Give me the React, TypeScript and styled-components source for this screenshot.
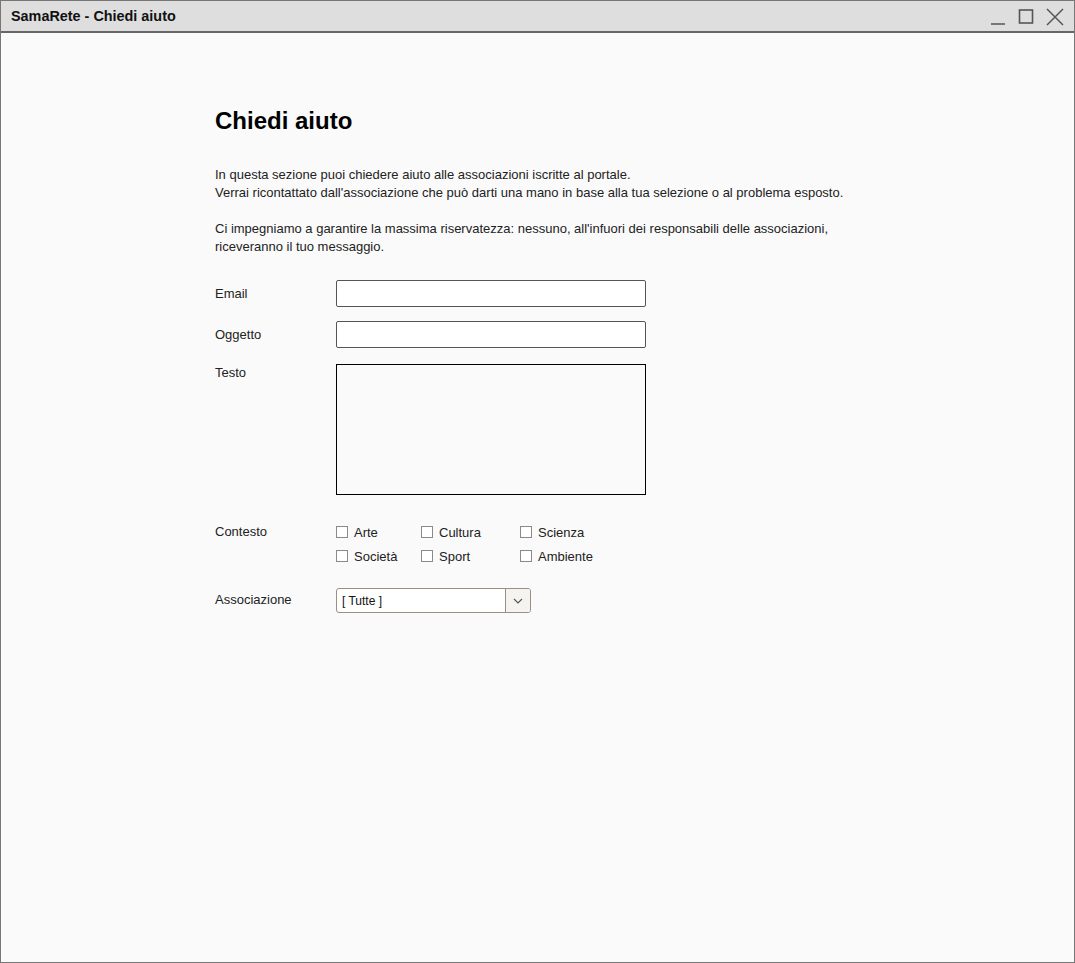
import styled, { createGlobalStyle } from 'styled-components';

const GlobalStyle = createGlobalStyle`
    html, body {
        margin: 0;
        padding: 0;
        background: #ffffff;
    }
    * {
        box-sizing: border-box;
    }
`;

const Window = styled.div`
    width: 1075px;
    height: 963px;
    border: 1px solid #777777;
    background: #fafafa;
    display: flex;
    flex-direction: column;
    font-family: 'Liberation Sans', Arial, sans-serif;
    color: #222222;
`;

const TitleBar = styled.div`
    height: 32px;
    flex: none;
    background: #dedede;
    border-bottom: 2px solid #666666;
    display: flex;
    align-items: center;
    justify-content: space-between;
    padding: 0 10px 0 10px;
`;

const TitleText = styled.div`
    font-size: 14.4px;
    font-weight: bold;
    color: #111111;
`;

const Controls = styled.div`
    display: flex;
    align-items: center;
    gap: 12px;
    margin-top: 1px;
`;

const Content = styled.div`
    padding: 74px 0 0 214px;
    width: 900px;
`;

const Heading = styled.h1`
    margin: 0 0 31px 0;
    font-size: 24px;
    font-weight: bold;
    color: #000000;
    line-height: 28px;
`;

const Paragraph = styled.p<{ $after: number }>`
    margin: 0 0 ${p => p.$after}px 0;
    font-size: 13px;
    line-height: 18px;
    color: #222222;
`;

const FormRow = styled.div<{ $gap: number }>`
    display: grid;
    grid-template-columns: 121px 1fr;
    align-items: start;
    margin-bottom: ${p => p.$gap}px;
`;

const Label = styled.div<{ $top: number }>`
    font-size: 13px;
    padding-top: ${p => p.$top}px;
    color: #222222;
`;

const TextInput = styled.div`
    width: 310px;
    height: 27px;
    background: #ffffff;
    border: 1.5px solid #555555;
    border-radius: 2px;
`;

const TextArea = styled.div`
    width: 310px;
    height: 131px;
    border: 1px solid #000000;
    background: #fafafa;
`;

const CheckGrid = styled.div`
    display: grid;
    grid-template-columns: 85px 99px 90px;
    row-gap: 6px;
`;

const CheckItem = styled.label`
    display: flex;
    align-items: center;
    gap: 6px;
    font-size: 13px;
    height: 18px;
`;

const Box = styled.span`
    width: 12px;
    height: 12px;
    border: 1px solid #8a8a8a;
    background: #ffffff;
    display: inline-block;
`;

const Select = styled.div`
    width: 195px;
    height: 25px;
    display: flex;
    border: 1px solid #9a8f80;
    border-radius: 3px;
    background: #ffffff;
    overflow: hidden;
`;

const SelectValue = styled.div`
    flex: 1;
    font-size: 12px;
    display: flex;
    align-items: center;
    padding-left: 5px;
    color: #111111;
`;

const SelectButton = styled.div`
    width: 25px;
    border-left: 1px solid #9a8f80;
    background: #f5f3f0;
    display: flex;
    align-items: center;
    justify-content: center;
`;

const contexts = ['Arte', 'Cultura', 'Scienza', 'Società', 'Sport', 'Ambiente'];

const App = () => {
    return (
        <>
            <GlobalStyle />
            <Window>
                <TitleBar>
                    <TitleText>SamaRete - Chiedi aiuto</TitleText>
                    <Controls>
                        <svg width="16" height="18" viewBox="0 0 16 18">
                            <line x1="1" y1="16" x2="15" y2="16" stroke="#555" strokeWidth="1.5" />
                        </svg>
                        <svg width="16" height="18" viewBox="0 0 16 18">
                            <rect x="1.5" y="2" width="13" height="13" fill="none" stroke="#555" strokeWidth="1.6" />
                        </svg>
                        <svg width="18" height="18" viewBox="0 0 18 18">
                            <path d="M1 1 L17 17 M17 1 L1 17" stroke="#555" strokeWidth="1.5" />
                        </svg>
                    </Controls>
                </TitleBar>
                <Content>
                    <Heading>Chiedi aiuto</Heading>
                    <Paragraph $after={18}>
                        In questa sezione puoi chiedere aiuto alle associazioni iscritte al portale.
                        <br />
                        Verrai ricontattato dall'associazione che può darti una mano in base alla tua selezione o al problema esposto.
                    </Paragraph>
                    <Paragraph $after={24}>
                        Ci impegniamo a garantire la massima riservatezza: nessuno, all'infuori dei responsabili delle associazioni,
                        <br />
                        riceveranno il tuo messaggio.
                    </Paragraph>
                    <FormRow $gap={14}>
                        <Label $top={6}>Email</Label>
                        <TextInput />
                    </FormRow>
                    <FormRow $gap={16}>
                        <Label $top={6}>Oggetto</Label>
                        <TextInput />
                    </FormRow>
                    <FormRow $gap={28}>
                        <Label $top={1}>Testo</Label>
                        <TextArea />
                    </FormRow>
                    <FormRow $gap={23}>
                        <Label $top={1}>Contesto</Label>
                        <CheckGrid>
                            {contexts.map(c => (
                                <CheckItem key={c}>
                                    <Box />
                                    {c}
                                </CheckItem>
                            ))}
                        </CheckGrid>
                    </FormRow>
                    <FormRow $gap={0}>
                        <Label $top={4}>Associazione</Label>
                        <Select>
                            <SelectValue>[ Tutte ]</SelectValue>
                            <SelectButton>
                                <svg width="10" height="6" viewBox="0 0 10 6">
                                    <path d="M1 1 L5 5 L9 1" fill="none" stroke="#555" strokeWidth="1.1" />
                                </svg>
                            </SelectButton>
                        </Select>
                    </FormRow>
                </Content>
            </Window>
        </>
    );
};

export default App;
